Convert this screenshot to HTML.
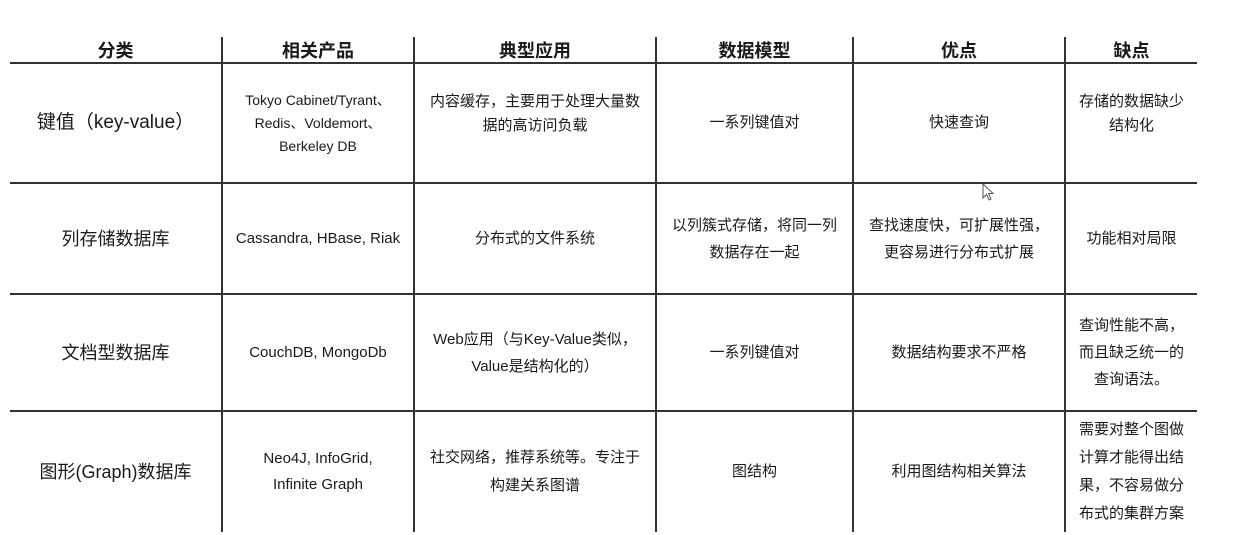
<!DOCTYPE html>
<html><head><meta charset="utf-8"><style>
body{margin:0;width:1234px;height:535px;background:#fff;position:relative;overflow:hidden;font-family:"Liberation Sans","Noto Sans CJK SC",sans-serif;color:#1a1a1a}
.h{position:absolute;left:10px;width:1187px;height:2px;background:#333}
.v{position:absolute;top:37px;height:495px;width:2px;background:#333}
.c{position:absolute;display:flex;align-items:center;justify-content:center;text-align:center;font-size:15px;line-height:24px}
.hd{font-weight:bold;font-size:18px}
</style></head><body>
<div class="h" style="top:62px"></div>
<div class="h" style="top:182px"></div>
<div class="h" style="top:293px"></div>
<div class="h" style="top:410px"></div>
<div class="v" style="left:221px"></div>
<div class="v" style="left:413px"></div>
<div class="v" style="left:655px"></div>
<div class="v" style="left:852px"></div>
<div class="v" style="left:1064px"></div>

<div class="c hd" style="left:10px;width:211px;top:38px;height:25px">分类</div>
<div class="c hd" style="left:223px;width:190px;top:38px;height:25px">相关产品</div>
<div class="c hd" style="left:415px;width:240px;top:38px;height:25px">典型应用</div>
<div class="c hd" style="left:657px;width:195px;top:38px;height:25px">数据模型</div>
<div class="c hd" style="left:854px;width:210px;top:38px;height:25px">优点</div>
<div class="c hd" style="left:1066px;width:131px;top:38px;height:25px">缺点</div>

<div class="c" style="left:10px;width:211px;top:64px;height:118px;font-size:19px">键值（key-value）</div>
<div class="c" style="left:223px;width:190px;top:64px;height:118px;font-size:14px;line-height:23px">Tokyo Cabinet/Tyrant、<br>Redis、Voldemort、<br>Berkeley DB</div>
<div class="c" style="left:415px;width:240px;top:64px;height:100px">内容缓存，主要用于处理大量数<br>据的高访问负载</div>
<div class="c" style="left:657px;width:195px;top:64px;height:118px">一系列键值对</div>
<div class="c" style="left:854px;width:210px;top:64px;height:118px">快速查询</div>
<div class="c" style="left:1066px;width:131px;top:64px;height:100px">存储的数据缺少<br>结构化</div>

<div class="c" style="left:10px;width:211px;top:184px;height:109px;font-size:18px">列存储数据库</div>
<div class="c" style="left:223px;width:190px;top:184px;height:109px">Cassandra, HBase, Riak</div>
<div class="c" style="left:415px;width:240px;top:184px;height:109px">分布式的文件系统</div>
<div class="c" style="left:657px;width:195px;top:184px;height:109px;line-height:27px">以列簇式存储，将同一列<br>数据存在一起</div>
<div class="c" style="left:854px;width:210px;top:184px;height:109px;line-height:27px">查找速度快，可扩展性强，<br>更容易进行分布式扩展</div>
<div class="c" style="left:1066px;width:131px;top:184px;height:109px">功能相对局限</div>

<div class="c" style="left:10px;width:211px;top:295px;height:115px;font-size:18px">文档型数据库</div>
<div class="c" style="left:223px;width:190px;top:295px;height:115px">CouchDB, MongoDb</div>
<div class="c" style="left:415px;width:240px;top:295px;height:115px;line-height:27px">Web应用（与Key-Value类似，<br>Value是结构化的）</div>
<div class="c" style="left:657px;width:195px;top:295px;height:115px">一系列键值对</div>
<div class="c" style="left:854px;width:210px;top:295px;height:115px">数据结构要求不严格</div>
<div class="c" style="left:1066px;width:131px;top:295px;height:115px;line-height:27px">查询性能不高，<br>而且缺乏统一的<br>查询语法。</div>

<div class="c" style="left:10px;width:211px;top:412px;height:120px;font-size:18px">图形(Graph)数据库</div>
<div class="c" style="left:223px;width:190px;top:412px;height:120px;line-height:26px">Neo4J, InfoGrid,<br>Infinite Graph</div>
<div class="c" style="left:415px;width:240px;top:412px;height:120px;line-height:28px">社交网络，推荐系统等。专注于<br>构建关系图谱</div>
<div class="c" style="left:657px;width:195px;top:412px;height:120px">图结构</div>
<div class="c" style="left:854px;width:210px;top:412px;height:120px">利用图结构相关算法</div>
<div class="c" style="left:1066px;width:131px;top:412px;height:120px;line-height:28px">需要对整个图做<br>计算才能得出结<br>果，不容易做分<br>布式的集群方案</div>

<svg style="position:absolute;left:982px;top:183px" width="14" height="20" viewBox="0 0 14 20"><path d="M1 1 L1 15 L4.5 11.5 L7 17 L9 16 L6.5 10.5 L11 10.5 Z" fill="#fff" stroke="#555" stroke-width="1"/></svg>
</body></html>
